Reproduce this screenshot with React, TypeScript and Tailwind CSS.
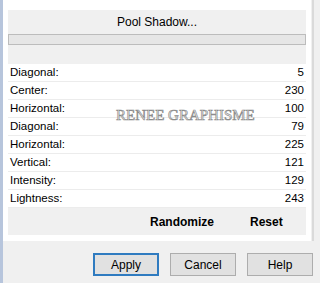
const rows = [
  { label: 'Diagonal:', value: 5 },
  { label: 'Center:', value: 230 },
  { label: 'Horizontal:', value: 100 },
  { label: 'Diagonal:', value: 79 },
  { label: 'Horizontal:', value: 225 },
  { label: 'Vertical:', value: 121 },
  { label: 'Intensity:', value: 129 },
  { label: 'Lightness:', value: 243 },
];

const buttons = ['Apply', 'Cancel', 'Help'];

export default function App() {
  return (
    <div className="flex h-[283px] w-[320px] bg-[#f0f0f0] font-['Liberation_Sans',Arial,sans-serif] text-[12px] text-black">
      <div className="w-[3px] bg-[#b7c5dc]" />
      <div className="flex w-[317px] flex-col">
        <div className="flex">
          <div className="relative flex h-[241px] w-[308px] flex-col bg-white px-[5px] pt-[10px]">
            <div className="flex h-[54px] flex-col bg-[#f0f0f0]">
              <div className="flex h-[24px] items-center justify-center">Pool Shadow...</div>
              <div className="h-[11px] border border-[#bcbcbc] bg-[#e6e6e6]" />
            </div>
            {rows.map((row, i) => (
              <div className="flex h-[18px] items-center justify-between border-b border-[#ececec] px-[2px] text-[11.5px]" key={i}>
                <span>{row.label}</span>
                <span>{row.value}</span>
              </div>
            ))}
            <div className="flex h-[27px] items-center bg-[#f0f0f0] font-bold">
              <span className="ml-[142px]">Randomize</span>
              <span className="ml-[36px]">Reset</span>
            </div>
            {/* watermark */}
            <div className="pointer-events-none absolute left-[113px] top-[104px] font-['Liberation_Serif',serif] text-[15px] text-[#f4f4f4] [-webkit-text-stroke:0.7px_#8c8c8c]">
              RENEE GRAPHISME
            </div>
          </div>
          <div className="ml-[1px] w-[2px] bg-[#dadada]" />
        </div>
        <div className="mt-[12px] flex gap-[11px] pl-[90px]">
          {buttons.map((b) => (
            <button
              className={`flex h-[23px] w-[66px] items-center justify-center bg-[#e1e1e1] ${b === 'Apply' ? 'border-2 border-[#2f7bc0]' : 'border border-[#adadad]'}`}
              key={b}
              type="button"
            >
              {b}
            </button>
          ))}
        </div>
      </div>
    </div>
  );
}
